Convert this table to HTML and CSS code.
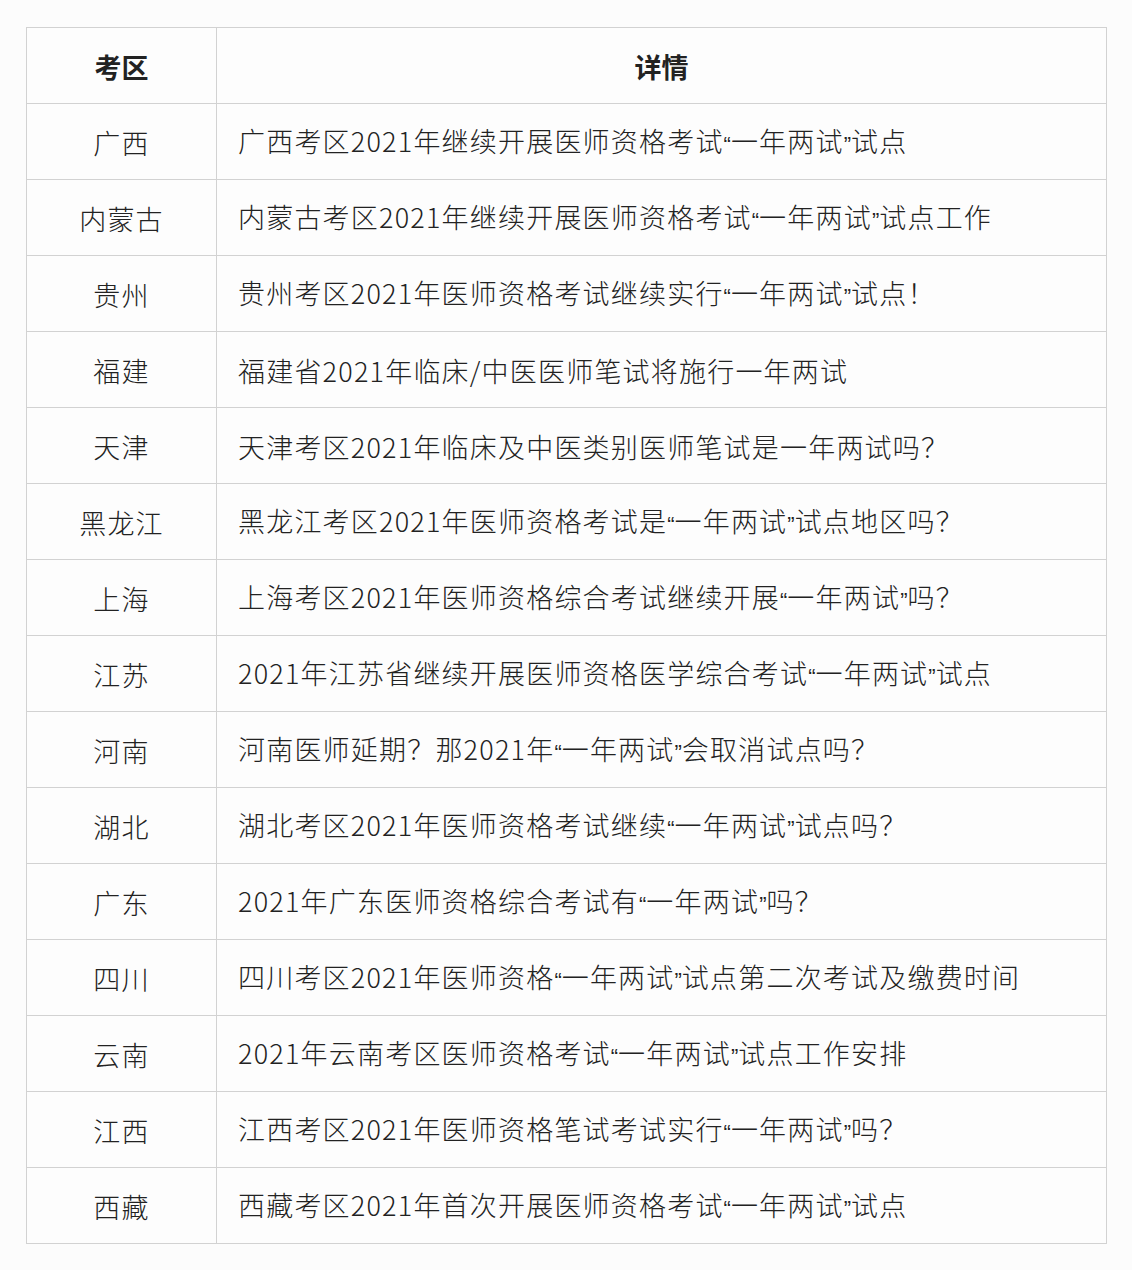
FILE: index.html
```html
<!DOCTYPE html>
<html lang="zh-CN">
<head>
<meta charset="utf-8">
<title>医师资格考试一年两试</title>
<link rel="stylesheet" href="styles.css">
</head>
<body>
<table class="grid">
  <colgroup><col class="c-area"><col class="c-detail"></colgroup>
  <thead>
    <tr><th>考区</th><th>详情</th></tr>
  </thead>
  <tbody>
    <tr><td class="area">广西</td><td class="detail">广西考区2021年继续开展医师资格考试<span class="q">“</span>一年两试<span class="q">”</span>试点</td></tr>
    <tr><td class="area">内蒙古</td><td class="detail">内蒙古考区2021年继续开展医师资格考试<span class="q">“</span>一年两试<span class="q">”</span>试点工作</td></tr>
    <tr><td class="area">贵州</td><td class="detail">贵州考区2021年医师资格考试继续实行<span class="q">“</span>一年两试<span class="q">”</span>试点！</td></tr>
    <tr><td class="area">福建</td><td class="detail">福建省2021年临床/中医医师笔试将施行一年两试</td></tr>
    <tr><td class="area">天津</td><td class="detail">天津考区2021年临床及中医类别医师笔试是一年两试吗？</td></tr>
    <tr><td class="area">黑龙江</td><td class="detail">黑龙江考区2021年医师资格考试是<span class="q">“</span>一年两试<span class="q">”</span>试点地区吗？</td></tr>
    <tr><td class="area">上海</td><td class="detail">上海考区2021年医师资格综合考试继续开展<span class="q">“</span>一年两试<span class="q">”</span>吗？</td></tr>
    <tr><td class="area">江苏</td><td class="detail">2021年江苏省继续开展医师资格医学综合考试<span class="q">“</span>一年两试<span class="q">”</span>试点</td></tr>
    <tr><td class="area">河南</td><td class="detail">河南医师延期？那2021年<span class="q">“</span>一年两试<span class="q">”</span>会取消试点吗？</td></tr>
    <tr><td class="area">湖北</td><td class="detail">湖北考区2021年医师资格考试继续<span class="q">“</span>一年两试<span class="q">”</span>试点吗？</td></tr>
    <tr><td class="area">广东</td><td class="detail">2021年广东医师资格综合考试有<span class="q">“</span>一年两试<span class="q">”</span>吗？</td></tr>
    <tr><td class="area">四川</td><td class="detail">四川考区2021年医师资格<span class="q">“</span>一年两试<span class="q">”</span>试点第二次考试及缴费时间</td></tr>
    <tr><td class="area">云南</td><td class="detail">2021年云南考区医师资格考试<span class="q">“</span>一年两试<span class="q">”</span>试点工作安排</td></tr>
    <tr><td class="area">江西</td><td class="detail">江西考区2021年医师资格笔试考试实行<span class="q">“</span>一年两试<span class="q">”</span>吗？</td></tr>
    <tr><td class="area">西藏</td><td class="detail">西藏考区2021年首次开展医师资格考试<span class="q">“</span>一年两试<span class="q">”</span>试点</td></tr>
  </tbody>
</table>
</body>
</html>
```

FILE: styles.css
```css
html, body {
  background: #fcfcfc;
}
body {
  margin: 0;
  padding: 27px 0 0 26px;
  font-family: "Noto Sans CJK SC", "Liberation Sans", sans-serif;
  color: #222;
}
.grid {
  border-collapse: collapse;
  width: 1081px;
  table-layout: fixed;
  background: #fdfdfd;
}
.c-area { width: 190px; }
.grid th,
.grid td {
  border: 1px solid #d2d2d2;
  height: 72px;
  padding: 3px 0 0 0;
  font-size: 27px;
  line-height: 30px;
  vertical-align: middle;
  letter-spacing: 1.2px;
  font-weight: 300;
}
.grid th {
  font-weight: bold;
  text-align: center;
  color: #222;
  letter-spacing: 0;
}
.area {
  text-align: center;
}
.detail {
  text-align: left;
  padding-left: 21px !important;
  white-space: nowrap;
}
.q {
  font-family: "Liberation Sans", sans-serif;
  font-weight: normal;
  letter-spacing: 0;
  font-size: 22px;
}
```
